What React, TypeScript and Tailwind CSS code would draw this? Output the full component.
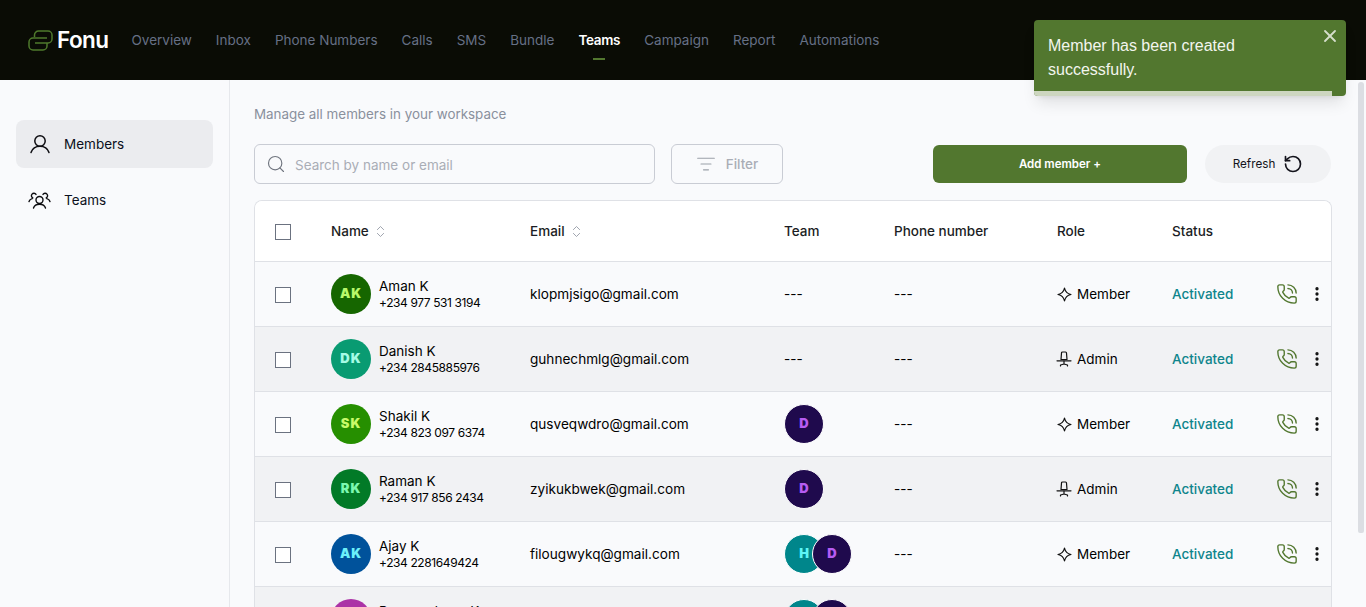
import React from 'react';
import { ChevronsUpDown, Search, RotateCcw, EllipsisVertical, PhoneCall, X, ListFilter } from 'lucide-react';

const navItems = ['Overview', 'Inbox', 'Phone Numbers', 'Calls', 'SMS', 'Bundle', 'Teams', 'Campaign', 'Report', 'Automations'];

type TeamChip = { label: string; bg: string; fg: string };
const H: TeamChip = { label: 'H', bg: 'bg-[#00868b]', fg: 'text-[#5ef6f6]' };
const D: TeamChip = { label: 'D', bg: 'bg-[#1f0a4d]', fg: 'text-[#b65cf2]' };

type Member = {
    initials: string;
    name: string;
    phone: string;
    email: string;
    bg: string;
    fg: string;
    teams: TeamChip[];
    role: 'Member' | 'Admin';
};

const members: Member[] = [
    { initials: 'AK', name: 'Aman K', phone: '+234 977 531 3194', email: 'klopmjsigo@gmail.com', bg: 'bg-[#166600]', fg: 'text-[#b8f86a]', teams: [], role: 'Member' },
    { initials: 'DK', name: 'Danish K', phone: '+234 2845885976', email: 'guhnechmlg@gmail.com', bg: 'bg-[#099b72]', fg: 'text-[#a6fbe6]', teams: [], role: 'Admin' },
    { initials: 'SK', name: 'Shakil K', phone: '+234 823 097 6374', email: 'qusveqwdro@gmail.com', bg: 'bg-[#268f00]', fg: 'text-[#c8fa6a]', teams: [D], role: 'Member' },
    { initials: 'RK', name: 'Raman K', phone: '+234 917 856 2434', email: 'zyikukbwek@gmail.com', bg: 'bg-[#027a27]', fg: 'text-[#7cf8b0]', teams: [D], role: 'Admin' },
    { initials: 'AK', name: 'Ajay K', phone: '+234 2281649424', email: 'filougwykq@gmail.com', bg: 'bg-[#00529b]', fg: 'text-[#6cf0fa]', teams: [H, D], role: 'Member' },
    { initials: 'PK', name: 'Parameshwar K', phone: '+234 701 442 8190', email: 'parameshkqw@gmail.com', bg: 'bg-[#ab33a6]', fg: 'text-[#f8a6f0]', teams: [H, D], role: 'Admin' },
];

const cols = 'grid grid-cols-[76px_199px_254px_110px_163px_115px_1fr] items-center';

const Logo = () => (
    <svg width="25" height="21" viewBox="0 0 25 21" fill="none" stroke="#4f7a2c" strokeWidth="1.5">
        <path d="M6.500 7V5a4 4 0 0 1 4-4H20a4 4 0 0 1 4 4v4a4 4 0 0 1-4 4H7" />
        <path d="M19 8H5a4 4 0 0 0-4 4v4a4 4 0 0 0 4 4h10a4 4 0 0 0 4-4v-3" />
    </svg>
);

const UserIcon = () => (
    <svg width="20" height="20" viewBox="0 0 20 20" fill="none" stroke="#0c0c10" strokeWidth="1.500" strokeLinecap="round">
        <circle cx="10" cy="7" r="5.200" />
        <path d="M1 18.500c1.200-3.600 4.600-6.300 9-6.300s7.800 2.700 9 6.300" />
    </svg>
);

const TeamsIcon = () => (
    <svg width="23" height="18" viewBox="0 0 23 18" fill="none" stroke="#0c0c10" strokeWidth="1.400" strokeLinecap="round">
        <circle cx="11.500" cy="9" r="3.500" />
        <path d="M5.500 17c.8-2.500 3-3.800 6-3.800s5.200 1.300 6 3.800" />
        <path d="M8 3.400a2.500 2.500 0 1 0-3.200 3.600" />
        <path d="M15 3.400a2.500 2.500 0 1 1 3.200 3.600" />
        <path d="M1 10.500c.5-1.500 1.600-2.500 3.200-2.900" />
        <path d="M22 10.500c-.5-1.500-1.600-2.500-3.200-2.900" />
    </svg>
);

const SparkleIcon = () => (
    <svg width="15" height="15" viewBox="0 0 15 15" fill="none" stroke="#111" strokeWidth="1.200" strokeLinejoin="round">
        <path d="M7.500 1c.7 3.500 2.500 5.700 6.500 6.500-4 .8-5.800 3-6.500 6.500-.7-3.500-2.500-5.700-6.500-6.500 4-.8 5.800-3 6.500-6.500z" />
    </svg>
);

const ChairIcon = () => (
    <svg width="16" height="16" viewBox="0 0 16 16" fill="none" stroke="#111" strokeWidth="1.200" strokeLinecap="round" strokeLinejoin="round" className="-ml-px">
        <path d="M5 8.500 5.500 2a1 1 0 0 1 1-1h3a1 1 0 0 1 1 1l.5 6.500z" />
        <path d="M1 9.800h14" />
        <path d="M8 10v3M4.500 15v-1L8 13l3.500 1v1" />
    </svg>
);

const Check = () => <div className="h-4 w-4 shrink-0 border border-[#6b7280] bg-white" />;

const Bubble = ({ chip, overlap }: { chip: TeamChip; overlap?: boolean }) => (
    <div className={`flex h-10 w-10 items-center justify-center rounded-full border border-white text-[13px] font-black ${chip.bg} ${chip.fg} ${overlap ? '-ml-3' : ''}`}>
        {chip.label}
    </div>
);

const Row = ({ m, index }: { m: Member; index: number }) => (
    <div className={`${cols} h-[65px] border-t border-[#dfe1e6] ${index % 2 === 1 ? 'bg-[#f1f2f4]' : 'bg-[#f9fafc]'}`}>
        <div className="pl-5 pt-[2px]"><Check /></div>
        <div className="flex items-center gap-2">
            <div className={`flex h-10 w-10 items-center justify-center rounded-full text-[13px] font-black tracking-[1px] ${m.bg} ${m.fg}`}>{m.initials}</div>
            <div>
                <div className="text-[13.500px] leading-[18px] text-black">{m.name}</div>
                <div className="text-[12px] leading-[16px] tracking-[-0.4px] text-black">{m.phone}</div>
            </div>
        </div>
        <div className="text-[13.600px] text-black">{m.email}</div>
        <div className="flex">
            {m.teams.length === 0 ? <span className="text-[13.500px] text-black">---</span> : m.teams.map((t, i) => <Bubble key={i} chip={t} overlap={i > 0} />)}
        </div>
        <div className="text-[13.500px] text-black">---</div>
        <div className="flex items-center gap-[5px] text-[13.500px] text-black">
            {m.role === 'Member' ? <SparkleIcon /> : <ChairIcon />}
            {m.role}
        </div>
        <div className="flex items-center">
            <span className="w-[104px] text-[13.500px] font-medium text-[#0f858c]">Activated</span>
            <PhoneCall size={22} strokeWidth={1.500} className="text-[#52772f]" />
            <EllipsisVertical size={18} strokeWidth={2.400} className="ml-[10px] text-[#111]" />
        </div>
    </div>
);

const App: React.FC = () => {
    return (
        <div className="flex h-screen flex-col overflow-hidden bg-[#f9fafc] font-['Inter',sans-serif]">
            <header className="flex h-20 shrink-0 items-center bg-[#0a0c05] pl-7">
                <Logo />
                <span className="ml-1 text-[22.500px] font-semibold tracking-tight text-white">Fonu</span>
                <nav className="mb-[2px] ml-[23px] flex gap-6">
                    {navItems.map((item) => (
                        <div key={item} className="relative">
                            <span className={`text-[13.500px] ${item === 'Teams' ? 'font-semibold tracking-[-0.3px] text-white' : 'text-[#667085]'}`}>{item}</span>
                            {item === 'Teams' && <div className="absolute -bottom-[9px] left-1/2 h-0.5 w-3 -translate-x-1/2 bg-[#52772f]" />}
                        </div>
                    ))}
                </nav>
            </header>

            <div className="flex min-h-0 flex-1">
                <aside className="w-[230px] shrink-0 border-r border-[#e6e8ec] px-4 pt-10">
                    <div className="flex h-12 w-[197px] items-center gap-[14px] rounded-lg bg-[#ebecef] pl-[14px] text-[13.500px] text-[#0c1020]">
                        <UserIcon />
                        Members
                    </div>
                    <div className="mt-2 flex h-12 items-center gap-[13px] pl-3 text-[13.500px] text-[#0c1020]">
                        <TeamsIcon />
                        Teams
                    </div>
                </aside>

                <main className="min-w-0 flex-1 pl-6 pr-[26px] pt-[26px]">
                    <p className="text-[13.400px] leading-[17px] text-[#8a909c]">Manage all members in your workspace</p>
                    <div className="mt-[21px] flex items-center">
                        <div className="flex h-10 w-[401px] items-center gap-[9px] rounded-md border border-[#c9ccd4] pl-[11px] text-[13.500px] text-[#a9adb6]">
                            <Search size={20} strokeWidth={1.400} className="text-[#70757f]" />
                            <span className="pt-[2px]">Search by name or email</span>
                        </div>
                        <div className="ml-4 flex h-10 w-[112px] items-center justify-center gap-[10px] rounded-md border border-[#c9ccd4] text-[13.500px] font-medium text-[#a9adb6]">
                            <ListFilter size={20} strokeWidth={1.300} className="text-[#9aa0a8]" />
                            Filter
                        </div>
                        <div className="ml-[150px] flex h-[38px] w-[254px] items-center justify-center rounded-md bg-[#52772f] pt-[1px] text-[11.500px] font-semibold text-white">
                            Add member +
                        </div>
                        <div className="ml-[18px] flex h-[38px] w-[126px] items-center justify-center gap-2 rounded-full bg-[#f1f2f4] text-[11.700px] text-[#14141c]">
                            <span className="pt-[1px]">Refresh</span>
                            <RotateCcw size={20} strokeWidth={2} />
                        </div>
                    </div>

                    <div className="mt-[16px] overflow-hidden rounded-t-lg border border-b-0 border-[#dfe1e6]">
                        <div className={`${cols} h-[60px] bg-white text-[13.500px] font-medium text-[#1b1d24]`}>
                            <div className="pl-5 pt-[2px]"><Check /></div>
                            <div className="flex items-center gap-1">Name <ChevronsUpDown size={15} strokeWidth={1.300} className="text-[#8a909c]" /></div>
                            <div className="flex items-center gap-1">Email <ChevronsUpDown size={15} strokeWidth={1.300} className="text-[#8a909c]" /></div>
                            <div>Team</div>
                            <div>Phone number</div>
                            <div>Role</div>
                            <div>Status</div>
                        </div>
                        {members.map((m, i) => <Row key={i} m={m} index={i} />)}
                    </div>
                </main>

                <div className="w-2 shrink-0 pt-[2px]">
                    <div className="h-[451px] w-[6px] rounded-b-sm rounded-t-md bg-[#dcdee3]" />
                </div>
            </div>

            <div className="absolute left-[1034px] top-5 w-[312px] overflow-hidden rounded bg-[#52772f] shadow-lg">
                <div className="h-[71px] pl-[14px] pr-10 pt-[14px] font-['Liberation_Sans',sans-serif] text-[16px] leading-6 text-[#f2f5ee]">
                    Member has been created successfully.
                </div>
                <X size={20} strokeWidth={2.200} className="absolute right-[6px] top-[6px] text-[#d5decb]" />
                <div className="h-[5px] w-[298px] bg-[#cdd6c0]" />
            </div>
        </div>
    );
};

export default App;
